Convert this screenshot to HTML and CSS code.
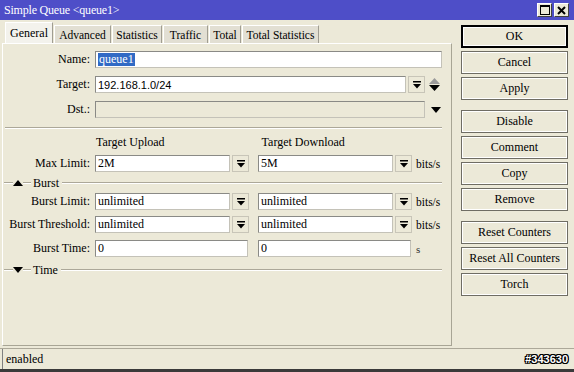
FILE: index.html
```html
<!DOCTYPE html>
<html>
<head>
<meta charset="utf-8">
<link rel="stylesheet" href="styles.css">
</head>
<body>
<div class="window">
  <div class="titlebar">
    <span class="title">Simple Queue &lt;queue1&gt;</span>
    <div class="tbtns">
      <span class="tb"><svg width="10" height="10" viewBox="0 0 10 10"><rect x="0.5" y="0.5" width="9" height="9" fill="none" stroke="#000" stroke-width="1"/><rect x="0" y="0" width="10" height="2" fill="#000"/></svg></span>
      <span class="tb"><svg width="9" height="9" viewBox="0 0 9 9"><path d="M1 1 L8 8 M8 1 L1 8" stroke="#000" stroke-width="2"/></svg></span>
    </div>
  </div>
  <div class="main">
    <div class="left">
      <div class="tabs">
        <span class="tab active t-general">General</span>
        <span class="tab t-advanced">Advanced</span>
        <span class="tab t-statistics">Statistics</span>
        <span class="tab t-traffic">Traffic</span>
        <span class="tab t-total">Total</span>
        <span class="tab t-totalstats">Total Statistics</span>
      </div>
      <div class="panel">
        <div class="row r-name">
          <span class="label">Name:</span>
          <span class="input w-name"><span class="sel">queue1</span></span>
        </div>
        <div class="row r-std">
          <span class="label">Target:</span>
          <span class="input w-target">192.168.1.0/24</span>
          <span class="dd"><svg width="8" height="8" viewBox="0 0 8 8"><rect x="0" y="0" width="8" height="1.5"/><polygon points="0,3 8,3 4,7.5"/></svg></span>
          <span class="updown"><svg width="11" height="13" viewBox="0 0 11 13"><polygon points="5.5,0 11,6 0,6" fill="#9a9a9a"/><polygon points="0,7 11,7 5.5,13" fill="#000"/></svg></span>
        </div>
        <div class="row r-std">
          <span class="label">Dst.:</span>
          <span class="input disabled w-dst"></span>
          <span class="darrow"><svg width="10" height="6" viewBox="0 0 10 6"><polygon points="0,0 10,0 5,6" fill="#000"/></svg></span>
        </div>
        <div class="sep"></div>
        <div class="subhead">
          <span class="sh1">Target Upload</span>
          <span class="sh2">Target Download</span>
        </div>
        <div class="row r-max">
          <span class="label">Max Limit:</span>
          <span class="input w-half">2M</span>
          <span class="dd"><svg width="8" height="8" viewBox="0 0 8 8"><rect x="0" y="0" width="8" height="1.5"/><polygon points="0,3 8,3 4,7.5"/></svg></span>
          <span class="input w-half second">5M</span>
          <span class="dd"><svg width="8" height="8" viewBox="0 0 8 8"><rect x="0" y="0" width="8" height="1.5"/><polygon points="0,3 8,3 4,7.5"/></svg></span>
          <span class="unit">bits/s</span>
        </div>
        <div class="group g-burst">
          <span class="dash d1"></span>
          <svg class="gtri" width="10" height="6" viewBox="0 0 10 6"><polygon points="5,0 10,6 0,6" fill="#000"/></svg>
          <span class="dash d2"></span>
          <span class="gtext">Burst</span>
          <span class="gline"></span>
        </div>
        <div class="row r-bl">
          <span class="label">Burst Limit:</span>
          <span class="input w-half">unlimited</span>
          <span class="dd"><svg width="8" height="8" viewBox="0 0 8 8"><rect x="0" y="0" width="8" height="1.5"/><polygon points="0,3 8,3 4,7.5"/></svg></span>
          <span class="input w-half second">unlimited</span>
          <span class="dd"><svg width="8" height="8" viewBox="0 0 8 8"><rect x="0" y="0" width="8" height="1.5"/><polygon points="0,3 8,3 4,7.5"/></svg></span>
          <span class="unit">bits/s</span>
        </div>
        <div class="row r-bt">
          <span class="label">Burst Threshold:</span>
          <span class="input w-half">unlimited</span>
          <span class="dd"><svg width="8" height="8" viewBox="0 0 8 8"><rect x="0" y="0" width="8" height="1.5"/><polygon points="0,3 8,3 4,7.5"/></svg></span>
          <span class="input w-half second">unlimited</span>
          <span class="dd"><svg width="8" height="8" viewBox="0 0 8 8"><rect x="0" y="0" width="8" height="1.5"/><polygon points="0,3 8,3 4,7.5"/></svg></span>
          <span class="unit">bits/s</span>
        </div>
        <div class="row r-btime">
          <span class="label">Burst Time:</span>
          <span class="input w-wide">0</span>
          <span class="input w-wide second2">0</span>
          <span class="unit u-s">s</span>
        </div>
        <div class="group g-time">
          <span class="dash d1"></span>
          <svg class="gtri" width="10" height="6" viewBox="0 0 10 6"><polygon points="0,0 10,0 5,6" fill="#000"/></svg>
          <span class="dash d2"></span>
          <span class="gtext">Time</span>
          <span class="gline"></span>
        </div>
      </div>
    </div>
    <div class="buttons">
      <span class="btn default">OK</span>
      <span class="btn">Cancel</span>
      <span class="btn">Apply</span>
      <span class="btn gap">Disable</span>
      <span class="btn">Comment</span>
      <span class="btn">Copy</span>
      <span class="btn">Remove</span>
      <span class="btn gap">Reset Counters</span>
      <span class="btn">Reset All Counters</span>
      <span class="btn">Torch</span>
    </div>
  </div>
  <div class="status">
    <span class="st-left">enabled</span>
    <span class="st-right">#343630</span>
  </div>
</div>
</body>
</html>
```
FILE: styles.css
```css
* { box-sizing: border-box; }
html, body { margin: 0; padding: 0; }
body {
  font-family: "Liberation Serif", "Times New Roman", serif;
  font-size: 12px;
  color: #000;
  background: #ece9d8;
}
.window {
  width: 574px;
  height: 372px;
  background: #ece9d8;
  display: flex;
  flex-direction: column;
  border-bottom: 3px solid #3a3a3a;
}
.titlebar {
  height: 20px;
  background: #4e4ec8;
  display: flex;
  align-items: center;
  justify-content: space-between;
  padding: 0 5px 0 4px;
  flex: none;
}
.title {
  color: #fff;
  font-size: 12px;
  letter-spacing: -0.2px;
}
.tbtns { display: flex; gap: 2px; }
.tb {
  width: 15px;
  height: 14px;
  background: #ece9d8;
  border: 1px solid #fff;
  border-right-color: #404040;
  border-bottom-color: #404040;
  display: flex;
  align-items: center;
  justify-content: center;
}
.main {
  display: flex;
  flex: none;
  height: 326px;
}
.left {
  width: 459px;
  padding-top: 2px;
  display: flex;
  flex-direction: column;
}
.tabs {
  display: flex;
  align-items: flex-end;
  height: 21px;
  padding-left: 5px;
}
.tab {
  height: 18px;
  background: #e2dfd3;
  border: 1px solid #fff;
  border-bottom: none;
  border-right-color: #a09d92;
  display: flex;
  align-items: center;
  justify-content: center;
  margin-right: 1px;
  font-size: 11.5px;
  white-space: nowrap;
}
.tab.active {
  height: 21px;
  background: #f3f2ec;
  font-size: 12px;
}
.t-general { width: 48px; }
.t-advanced { width: 57px; }
.t-statistics { width: 50px; }
.t-traffic { width: 45px; }
.t-total { width: 32px; }
.t-totalstats { width: 77px; }
.panel {
  margin-left: 2px;
  width: 450px;
  height: 303px;
  border: 1px solid #fff;
  border-right-color: #a8a595;
  border-bottom-color: #a8a595;
  padding-top: 7px;
}
.row {
  display: flex;
  align-items: center;
  height: 17px;
  margin-top: 8px;
}
.r-name { margin-top: 0; }
.r-max { margin-top: 6px; }
.r-bl { margin-top: 3px; }
.r-bt { margin-top: 6px; }
.r-btime { margin-top: 7px; }
.label {
  width: 87px;
  text-align: right;
  margin-right: 5px;
  white-space: nowrap;
}
.input {
  height: 17px;
  background: #fff;
  border: 1px solid #8a8a86;
  border-right-color: #c4c2b8;
  border-bottom-color: #c4c2b8;
  padding-left: 2px;
  display: flex;
  align-items: center;
  white-space: nowrap;
  font-family: "Liberation Sans", Arial, sans-serif;
  font-size: 11px;
}
.r-name .input, .r-bl .input, .r-bt .input, .r-max .input, .r-btime .input {
  font-family: "Liberation Serif", "Times New Roman", serif;
  font-size: 12px;
}
.input.disabled { background: #ece9d8; }
.sel {
  background: #316ac5;
  color: #fff;
  padding: 0 1px;
  line-height: 13px;
}
.w-name { width: 347px; }
.w-target { width: 311px; }
.w-dst { width: 330px; }
.w-half { width: 135px; }
.w-wide { width: 153px; }
.second { margin-left: 9px; }
.second2 { margin-left: 10px; }
.dd {
  width: 17px;
  height: 17px;
  margin-left: 2px;
  background: #ece9d8;
  border: 1px solid #fff;
  border-right-color: #8a877a;
  border-bottom-color: #8a877a;
  display: flex;
  align-items: center;
  justify-content: center;
  outline: 1px solid #c8c5b8;
  outline-offset: -1px;
}
.dd svg { fill: #000; }
.updown { margin-left: 4px; display: flex; }
.darrow { margin-left: 6px; display: flex; }
.unit { margin-left: 4px; font-size: 11.5px; }
.u-s { margin-left: 5px; font-size: 11px; color: #333; }
.sep {
  margin: 9px 9px 0 2px;
  height: 2px;
  border-top: 1px solid #aca899;
  border-bottom: 1px solid #fff;
}
.subhead {
  display: flex;
  height: 14px;
  margin-top: 6px;
  align-items: center;
}
.sh1 { margin-left: 93px; }
.sh2 { margin-left: 97px; }
.group {
  display: flex;
  align-items: center;
  height: 14px;
  margin-top: 4px;
  padding-right: 9px;
}
.g-time { margin-top: 6px; }
.dash {
  height: 2px;
  border-top: 1px solid #aca899;
  border-bottom: 1px solid #fff;
}
.d1 { width: 9px; margin-left: 1px; }
.d2 { width: 8px; margin-right: 2px; }
.gtri { flex: none; }
.gtext { margin-right: 3px; }
.gline {
  flex: 1;
  height: 2px;
  border-top: 1px solid #aca899;
  border-bottom: 1px solid #fff;
}
.buttons {
  padding-top: 5px;
  padding-left: 2px;
  display: flex;
  flex-direction: column;
  gap: 3px;
}
.btn {
  width: 107px;
  height: 23px;
  border: 1px solid #6f6d64;
  outline: 1px solid #fff;
  outline-offset: -2px;
  background: #ece9d8;
  display: flex;
  align-items: center;
  justify-content: center;
  white-space: nowrap;
}
.btn.default {
  border: 2px solid #000;
  outline-offset: -3px;
}
.btn.gap { margin-top: 7px; }
.status {
  margin-top: 2px;
  height: 21px;
  border-top: 1px solid #aca899;
  display: flex;
  align-items: center;
  justify-content: space-between;
  padding: 0 6px 0 2px;
}
.st-left {
  border-left: 1px solid #808080;
  height: 20px;
  display: flex;
  align-items: center;
  padding-left: 3px;
}
.st-right {
  font-family: "Liberation Sans", Arial, sans-serif;
  font-weight: bold;
  font-size: 11px;
  color: #fff;
  text-shadow: 1px 0 0 #000, -1px 0 0 #000, 0 1px 0 #000, 0 -1px 0 #000, 1px 1px 0 #000, -1px -1px 0 #000, 1px -1px 0 #000, -1px 1px 0 #000;
}
```
